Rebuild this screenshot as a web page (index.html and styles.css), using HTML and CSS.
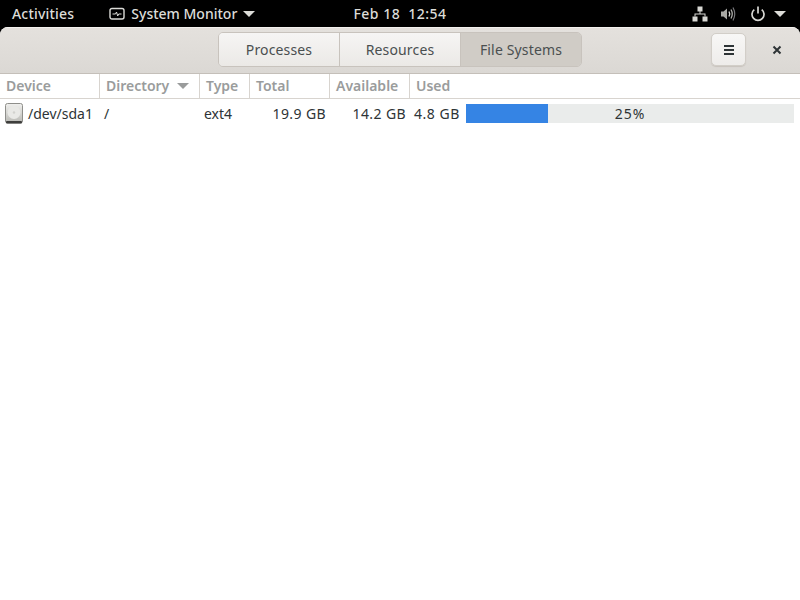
FILE: index.html
```html
<!DOCTYPE html>
<html lang="en">
<head>
<meta charset="utf-8">
<title>System Monitor</title>
<link rel="stylesheet" href="styles.css">
</head>
<body>
<div class="topbar">
  <div class="top-left">
    <span class="activities">Activities</span>
    <span class="app">
      <svg class="app-icon" width="16" height="14" viewBox="0 0 16 14"><rect x="1" y="1.5" width="14" height="10.5" rx="2" fill="none" stroke="#dcdcd8" stroke-width="1.4"/><path d="M3.5 7H6.5L7.5 5L8.7 9L9.7 7H12.5" fill="none" stroke="#dcdcd8" stroke-width="1"/></svg>
      <span>System Monitor</span>
      <span class="caret"></span>
    </span>
  </div>
  <div class="clock"><span class="date">Feb 18</span><span>12:54</span></div>
  <div class="tray">
    <svg width="16" height="16" viewBox="0 0 16 16" fill="#d8d8d4"><rect x="5.5" y="0.5" width="5" height="5"/><rect x="0.5" y="10.5" width="5" height="5"/><rect x="10.5" y="10.5" width="5" height="5"/><path d="M7.5 5h1v2.5H13.5v3h-1V8.5h-9v2h-1v-3H7.5z"/></svg>
    <svg width="16" height="16" viewBox="0 0 16 16"><path d="M1 5.5H3.5L7 2.5V13.5L3.5 10.5H1z" fill="#a8a8a4"/><path d="M9 5.5Q10.5 8 9 10.5" fill="none" stroke="#d8d8d4" stroke-width="1.4"/><path d="M11 3.5Q13.5 8 11 12.5" fill="none" stroke="#b0b0ac" stroke-width="1.3"/><path d="M13 1.5Q16.5 8 13 14.5" fill="none" stroke="#77777a" stroke-width="1.2"/></svg>
    <span class="power-group">
      <svg width="16" height="16" viewBox="0 0 16 16" fill="none" stroke="#d8d8d4" stroke-width="1.7"><path d="M4.3 3.6A6 6 0 1 0 11.7 3.6"/><path d="M8 0.5V7.5"/></svg>
      <span class="caret"></span>
    </span>
  </div>
</div>
<div class="window">
  <header class="headerbar">
    <div></div>
    <nav class="switcher">
      <button class="seg">Processes</button>
      <button class="seg">Resources</button>
      <button class="seg active">File Systems</button>
    </nav>
    <div class="actions">
      <button class="menu-btn" aria-label="Menu"><span class="burger"></span></button>
      <span class="close" aria-label="Close"><svg width="10" height="10" viewBox="0 0 10 10"><path d="M1.5 1.5L8.5 8.5M8.5 1.5L1.5 8.5" stroke="#2e3436" stroke-width="2"/></svg></span>
    </div>
  </header>
  <div class="cols thead">
    <div class="th">Device</div>
    <div class="th">Directory<span class="sort"></span></div>
    <div class="th">Type</div>
    <div class="th">Total</div>
    <div class="th">Available</div>
    <div class="th last">Used</div>
  </div>
  <div class="cols row">
    <div class="cell device">
      <svg class="disk" width="18" height="21" viewBox="0 0 18 21"><defs><linearGradient id="dg" x1="0" y1="0" x2="0" y2="1"><stop offset="0" stop-color="#f0f0ee"/><stop offset="1" stop-color="#b9b9b4"/></linearGradient></defs><rect x="0.5" y="0.5" width="17" height="19.5" rx="2" fill="url(#dg)" stroke="#8f8f8b"/><circle cx="9" cy="9.5" r="6.5" fill="#e9e9e6"/><circle cx="9" cy="9.5" r="1.2" fill="#d2d2ce"/><rect x="1" y="18" width="16" height="2.5" rx="1" fill="#3e3e3c"/></svg>
      <span>/dev/sda1</span>
    </div>
    <div class="cell dir">/</div>
    <div class="cell type">ext4</div>
    <div class="cell num">19.9 GB</div>
    <div class="cell num">14.2 GB</div>
    <div class="cell used">
      <span class="used-val">4.8 GB</span>
      <div class="bar"><div class="fill" style="width:25%"></div><span class="pct">25%</span></div>
    </div>
  </div>
</div>
</body>
</html>
```
FILE: styles.css
```css
* { box-sizing: border-box; }
html, body { margin: 0; height: 100%; }
body {
  width: 800px;
  height: 600px;
  overflow: hidden;
  background: #000;
  font-family: "Noto Sans", "Open Sans", sans-serif;
  font-size: 14px;
  color: #2e3436;
  display: flex;
  flex-direction: column;
}
.topbar {
  height: 27px;
  flex: none;
  background: #000;
  color: #dcdcd8;
  display: grid;
  grid-template-columns: 1fr auto 1fr;
  align-items: center;
  padding: 0 12px;
  font-weight: 500;
}
.top-left { display: flex; align-items: center; gap: 35px; }
.activities { letter-spacing: 0.2px; }
.app { display: flex; align-items: center; gap: 6px; }
.caret {
  width: 0; height: 0;
  border-left: 6px solid transparent;
  border-right: 6px solid transparent;
  border-top: 6px solid #dcdcd8;
  display: inline-block;
}
.clock { display: flex; gap: 8px; letter-spacing: 0.5px; }
.tray { display: flex; justify-content: flex-end; align-items: center; gap: 12px; padding-right: 2px; }
.tray svg { flex: none; }
.power-group { display: flex; align-items: center; gap: 8px; padding-left: 2px; }
.window {
  flex: 1;
  background: #fff;
  border-radius: 8px 8px 0 0;
  overflow: hidden;
  display: flex;
  flex-direction: column;
}
.headerbar {
  height: 47px;
  flex: none;
  display: grid;
  grid-template-columns: 1fr auto 1fr;
  align-items: center;
  padding: 0 0 2px;
  background: linear-gradient(#e4e1dd, #dbd8d4);
  border-top: 1px solid #f3f1ee;
  border-bottom: 1px solid #c4bfb9;
}
.switcher {
  display: flex;
  border: 1px solid #c8c3bd;
  border-radius: 5px;
  overflow: hidden;
}
button { font: inherit; color: inherit; }
.seg {
  width: 121px;
  height: 33px;
  border: 0;
  border-right: 1px solid #c8c3bd;
  background: linear-gradient(#f6f5f4, #ebe9e6);
  padding: 0;
  color: #4a4f50;
  letter-spacing: 0.15px;
}
.seg:last-child { border-right: 0; width: 120px; }
.seg.active { background: #d0ccc6; color: #4a4f50; }
.actions { display: flex; justify-content: flex-end; align-items: center; gap: 26px; padding-right: 18px; }
.menu-btn {
  width: 35px;
  height: 33px;
  border: 1px solid #d2cec8;
  border-radius: 5px;
  background: linear-gradient(#f8f7f6, #eeecea);
  box-shadow: 0 1px 1px #c8c3bd;
  display: flex;
  align-items: center;
  justify-content: center;
  padding: 0;
}
.burger {
  width: 10px;
  height: 10px;
  border-top: 2px solid #2e3436;
  border-bottom: 2px solid #2e3436;
  position: relative;
}
.burger::after {
  content: "";
  position: absolute;
  left: 0; right: 0; top: 2px;
  height: 2px;
  background: #2e3436;
}
.close { display: flex; width: 10px; height: 10px; }
.cols {
  display: grid;
  grid-template-columns: 100px 100px 50px 80px 80px 390px;
}
.thead {
  height: 25px;
  flex: none;
  border-bottom: 1px solid #d8d4cf;
  color: #9a9c9c;
  font-weight: 600;
}
.th {
  padding: 0 6px 1px;
  display: flex;
  align-items: center;
  border-right: 1px solid #d8d4cf;
}
.th.last { border-right: 0; }
.sort {
  width: 0; height: 0;
  margin-left: 8px;
  border-left: 6px solid transparent;
  border-right: 6px solid transparent;
  border-top: 6px solid #9a9c9c;
}
.row { height: 29px; flex: none; color: #2e3436; }
.cell { display: flex; align-items: center; padding: 0 4px; }
.device { padding: 0 0 0 5px; gap: 5px; }
.disk { flex: none; }
.num { justify-content: flex-end; letter-spacing: 0.4px; }
.used { padding: 0 6px 0 4px; gap: 6px; }
.used-val { letter-spacing: 0.55px; }
.bar {
  position: relative;
  flex: none;
  width: 328px;
  height: 19px;
  background: #eaeceb;
  display: flex;
  align-items: center;
  justify-content: center;
}
.fill { position: absolute; left: 0; top: 0; bottom: 0; background: #3584e4; }
.pct { position: relative; letter-spacing: 1px; }
```
